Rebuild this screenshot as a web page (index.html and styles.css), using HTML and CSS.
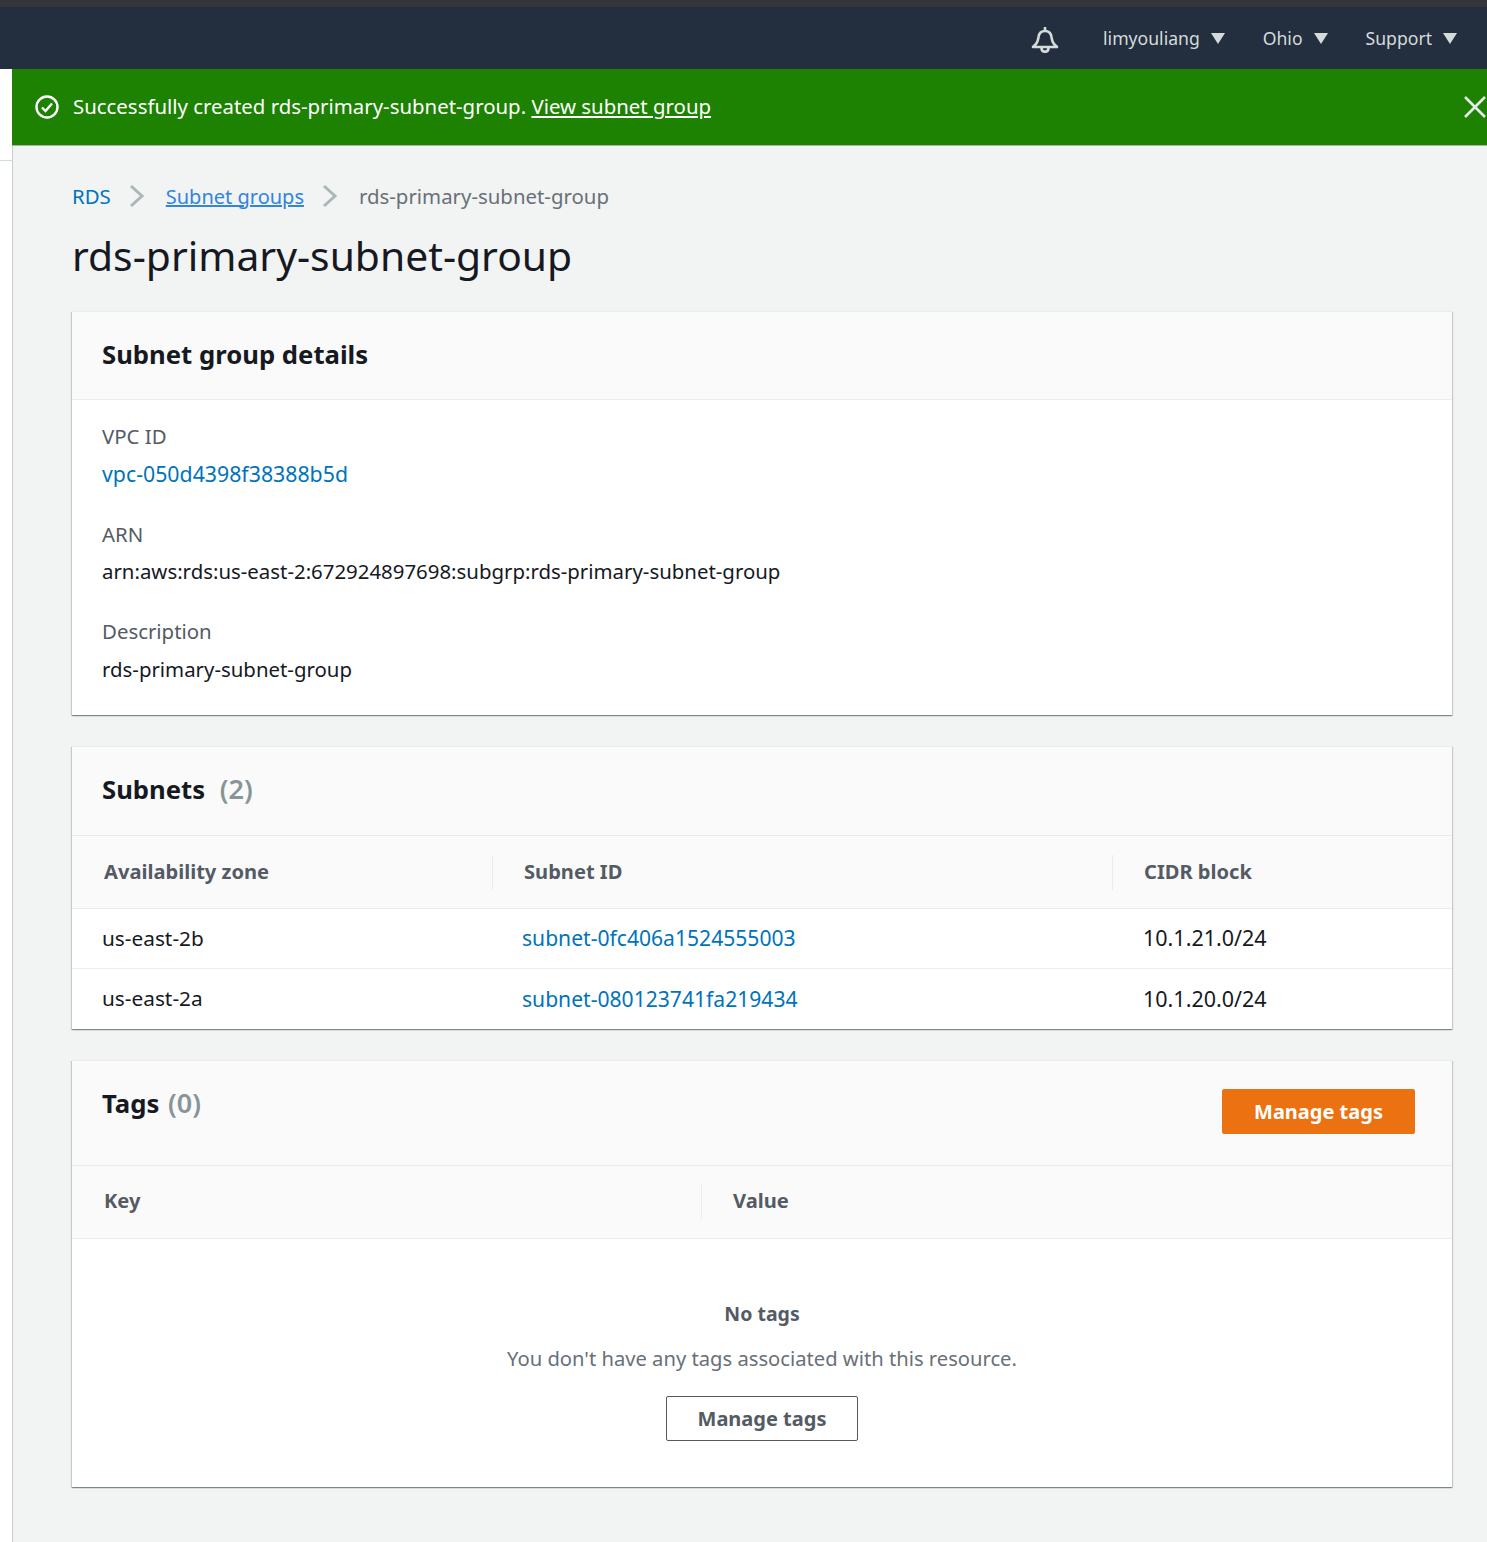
FILE: index.html
```html
<!DOCTYPE html>
<html lang="en">
<head>
    <meta charset="UTF-8">
    <title>rds-primary-subnet-group</title>
    <link rel="stylesheet" href="styles.css">
</head>
<body>

<div class="top-strip"></div>
<nav class="navbar">
    <svg class="bell" width="28" height="28" viewBox="0 0 28 28" fill="none" stroke="#d5dbdb" stroke-width="2.600" stroke-linejoin="round">
        <path d="M2 22 L5 19 C7 17 7 14.500 7.500 12 C8 8.500 10.500 6 14 6 C17.500 6 20 8.500 20.500 12 C21 14.500 21 17 23 19 L26 22 Z"/>
        <path d="M14 2 V6"/>
        <path d="M10.500 23 C10.500 28 17.500 28 17.500 23"/>
    </svg>
    <div class="nav-item nav-user">limyouliang <span class="caret"></span></div>
    <div class="nav-item nav-region">Ohio <span class="caret"></span></div>
    <div class="nav-item">Support <span class="caret"></span></div>
</nav>

<div class="shell">
    <div class="side"><div class="side-line"></div></div>
    <div class="main">
        <div class="flash">
            <svg class="flash-icon" width="24" height="24" viewBox="0 0 24 24" fill="none" stroke="#fff" stroke-width="2.400">
                <circle cx="12" cy="12" r="10.500"/>
                <path d="M7 12.500 L10.500 16 L17 8.500"/>
            </svg>
            <span class="flash-text">Successfully created rds-primary-subnet-group. <a href="#">View subnet group</a></span>
            <svg class="flash-close" width="22" height="22" viewBox="0 0 22 22" stroke="#e6eaea" stroke-width="2.600">
                <path d="M1 1 L21 21 M21 1 L1 21"/>
            </svg>
        </div>

        <div class="content">
            <div class="crumbs">
                <a class="crumb-link" href="#">RDS</a>
                <svg class="crumb-sep" width="16" height="24" viewBox="0 0 16 24" fill="none" stroke="#aab7b8" stroke-width="3"><path d="M2 2 L13 12 L2 22"/></svg>
                <a class="crumb-under" href="#">Subnet groups</a>
                <svg class="crumb-sep" width="16" height="24" viewBox="0 0 16 24" fill="none" stroke="#aab7b8" stroke-width="3"><path d="M2 2 L13 12 L2 22"/></svg>
                <span class="crumb-now">rds-primary-subnet-group</span>
            </div>
            <h1>rds-primary-subnet-group</h1>

            <section class="card card-details">
                <div class="card-head head-details"><h2>Subnet group details</h2></div>
                <div class="details">
                    <div class="field">
                        <div class="label">VPC ID</div>
                        <a class="value value-id link" href="#">vpc-050d4398f38388b5d</a>
                    </div>
                    <div class="field field-arn">
                        <div class="label">ARN</div>
                        <div class="value">arn:aws:rds:us-east-2:672924897698:subgrp:rds-primary-subnet-group</div>
                    </div>
                    <div class="field">
                        <div class="label">Description</div>
                        <div class="value">rds-primary-subnet-group</div>
                    </div>
                </div>
            </section>

            <section class="card card-subnets">
                <div class="card-head head-subnets"><h2>Subnets <span class="count count-wide">(2)</span></h2></div>
                <div class="thead cols-3">
                    <div class="th th-first">Availability zone</div>
                    <div class="th">Subnet ID</div>
                    <div class="th">CIDR block</div>
                </div>
                <div class="row cols-3">
                    <div class="td">us-east-2b</div>
                    <div class="td"><a class="link" href="#">subnet-0fc406a1524555003</a></div>
                    <div class="td td-cidr">10.1.21.0/24</div>
                </div>
                <div class="row cols-3">
                    <div class="td">us-east-2a</div>
                    <div class="td"><a class="link" href="#">subnet-080123741fa219434</a></div>
                    <div class="td td-cidr">10.1.20.0/24</div>
                </div>
            </section>

            <section class="card card-tags">
                <div class="card-head head-tags">
                    <h2>Tags <span class="count">(0)</span></h2>
                    <button class="btn btn-primary">Manage tags</button>
                </div>
                <div class="thead cols-2">
                    <div class="th th-first">Key</div>
                    <div class="th">Value</div>
                </div>
                <div class="empty">
                    <div class="empty-title">No tags</div>
                    <div class="empty-text">You don't have any tags associated with this resource.</div>
                    <button class="btn btn-plain">Manage tags</button>
                </div>
            </section>
        </div>
    </div>
</div>

</body>
</html>
```

FILE: styles.css
```css
* {
    box-sizing: border-box;
}
html, body {
    margin: 0;
    height: 1542px;
    overflow: hidden;
}
body {
    background-color: #f2f3f3;
    color: #16191f;
    font-family: "Noto Sans", "Open Sans", sans-serif;
    font-size: 20.4px;
}
a {
    text-decoration: none;
}

.top-strip {
    height: 7px;
    background-color: #333538;
}
.navbar {
    display: flex;
    align-items: center;
    justify-content: flex-end;
    height: 62px;
    padding-right: 30px;
    background-color: #232f3e;
    color: #d5dbdb;
    font-size: 17.6px;
}
.bell {
    margin-right: 44px;
    margin-top: 1px;
}
.nav-item {
    display: flex;
    align-items: center;
}
.nav-user {
    margin-right: 38px;
}
.nav-region {
    margin-right: 38px;
}
.caret {
    width: 0;
    height: 0;
    margin-left: 11px;
    border-left: 7px solid transparent;
    border-right: 7px solid transparent;
    border-top: 11px solid #d5dbdb;
}

.shell {
    display: flex;
    height: 1473px;
}
.side {
    width: 13px;
    flex-shrink: 0;
    background-color: #fff;
    border-right: 1px solid #c9cfcf;
}
.side-line {
    height: 1px;
    margin-top: 91px;
    background-color: #d5dbdb;
}
.main {
    flex: 1;
    min-width: 0;
    margin-left: -1px;
}

.flash {
    display: flex;
    align-items: center;
    height: 77px;
    padding: 0 1px 0 23px;
    background-color: #1d8102;
    border-bottom: 1px solid #a9b3a9;
    color: #fff;
}
.flash-text {
    flex: 1;
    margin: -2px 0 0 14px;
}
.flash-text a {
    color: #fff;
    text-decoration: underline;
}

.content {
    padding: 34px 35px 0 60px;
}
.crumbs {
    display: flex;
    align-items: center;
    height: 32px;
}
.crumb-link {
    color: #0073bb;
}
.crumb-under {
    color: #3184e0;
    font-size: 20px;
    text-decoration: underline;
}
.crumb-now {
    color: #687078;
}
.crumb-sep {
    margin: 0 21px 0 18px;
}
h1 {
    margin: 17px 0 30px;
    font-size: 40.8px;
    line-height: 52px;
    font-weight: 400;
}

.card {
    margin-bottom: 31px;
    background-color: #fff;
    border-top: 1px solid #eaeded;
    box-shadow: 0 1px 1px 0 rgba(0, 28, 36, 0.3), 1px 1px 1px 0 rgba(0, 28, 36, 0.15), -1px 1px 1px 0 rgba(0, 28, 36, 0.15);
}
.card-details {
    height: 404px;
}
.card-subnets {
    height: 283px;
}
.card-tags {
    height: 427px;
}
.card-head {
    background-color: #fafafa;
    border-bottom: 1px solid #eaeded;
}
.head-details {
    display: flex;
    align-items: center;
    height: 88px;
    padding: 0 0 2px 30px;
}
.head-subnets {
    display: flex;
    align-items: center;
    height: 89px;
    padding: 0 0 4px 30px;
}
.head-tags {
    display: flex;
    align-items: flex-start;
    justify-content: space-between;
    height: 105px;
    padding: 28px 37px 0 30px;
}
.head-tags h2 {
    margin-top: -2px;
}
h2 {
    margin: 0;
    font-size: 25.7px;
    line-height: 32px;
    font-weight: 700;
}
.count {
    margin-left: 2px;
    color: #879596;
    font-size: 27px;
    font-weight: 600;
}
.count-wide {
    margin-left: 8px;
}

.details {
    padding: 18px 30px 0;
}
.field {
    margin-bottom: 22px;
}
.field-arn {
    margin-bottom: 23px;
}
.field-arn .value {
    line-height: 38px;
}
.label {
    color: #545b64;
    line-height: 36px;
}
.value {
    display: block;
    line-height: 40px;
}
.value-id {
    font-size: 21.3px;
}
.link {
    color: #0073bb;
}

.cols-3 {
    display: grid;
    grid-template-columns: 420px 620px 1fr;
}
.cols-2 {
    display: grid;
    grid-template-columns: 629px 1fr;
}
.thead {
    align-items: center;
    height: 73px;
    background-color: #fafafa;
    border-bottom: 1px solid #eaeded;
}
.th {
    height: 35px;
    padding-left: 31px;
    border-left: 1px solid #eaeded;
    color: #545b64;
    font-size: 20.1px;
    font-weight: 700;
    line-height: 33px;
}
.th-first {
    padding-left: 32px;
    border-left: 0;
}
.cols-2 .th {
    margin-top: -2px;
}
.row {
    align-items: center;
    height: 60px;
    padding-bottom: 2px;
    border-bottom: 1px solid #eaeded;
}
.row:last-child {
    border-bottom: 0;
}
.td {
    padding-left: 30px;
    font-size: 20.8px;
}
.td .link {
    font-size: 21.1px;
}
.td-cidr {
    padding-left: 31px;
    font-size: 21.5px;
}

.btn {
    height: 45px;
    width: 193px;
    border-radius: 2px;
    font-family: inherit;
    font-size: 20px;
    font-weight: 700;
    cursor: pointer;
}
.btn-primary {
    background-color: #ec7211;
    border: 1px solid #ec7211;
    color: #fff;
}
.btn-plain {
    width: 192px;
    background-color: #fff;
    border: 1px solid #545b64;
    color: #545b64;
}
.empty {
    display: flex;
    flex-direction: column;
    align-items: center;
    padding-top: 57px;
}
.empty-title {
    color: #545b64;
    font-size: 19.5px;
    font-weight: 700;
    line-height: 36px;
}
.empty-text {
    margin: 8px 0 20px;
    color: #687078;
    font-size: 20.2px;
    line-height: 36px;
}
```
